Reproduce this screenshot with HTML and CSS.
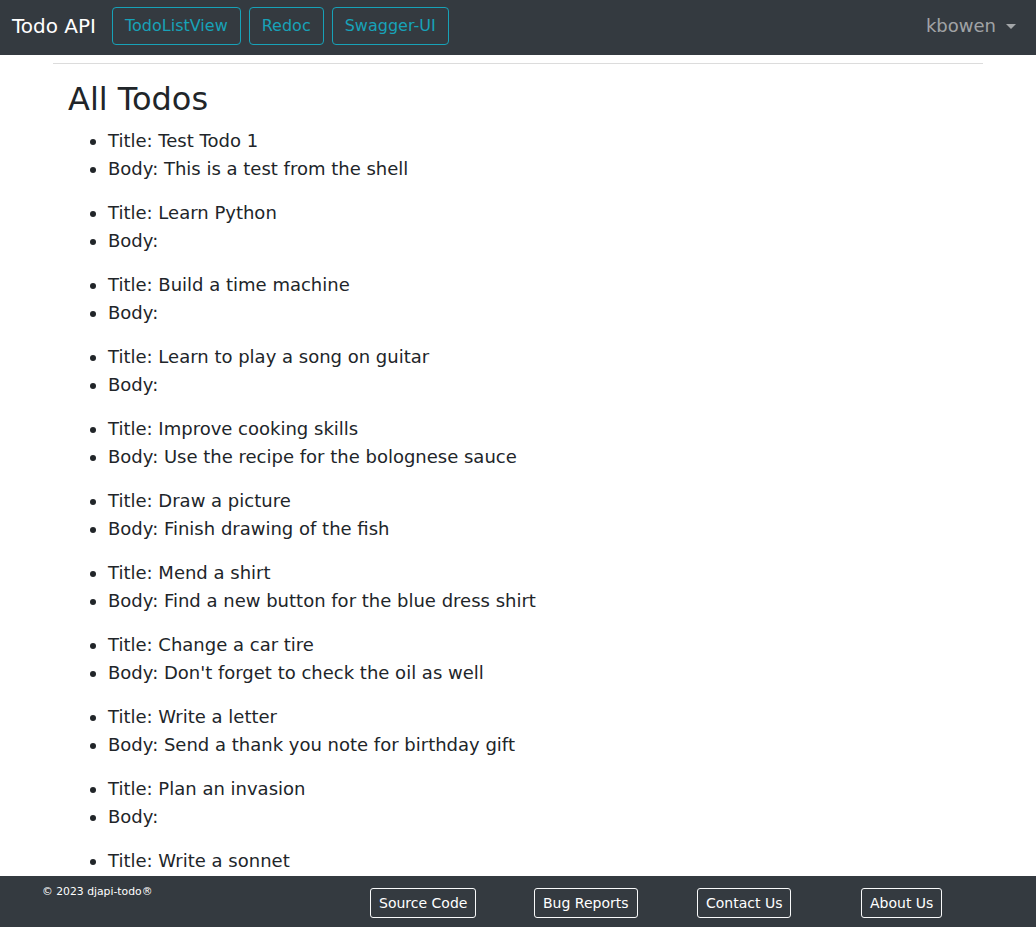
FILE: index.html
```html
<!DOCTYPE html>
<html lang="en">
<head>
<meta charset="utf-8">
<title>Todo API</title>
<link rel="stylesheet" href="styles.css">
</head>
<body>
<nav class="navbar">
  <a class="brand" href="#">Todo API</a>
  <div class="nav-links">
    <a class="btn-info" href="#">TodoListView</a>
    <a class="btn-info" href="#">Redoc</a>
    <a class="btn-info" href="#">Swagger-UI</a>
  </div>
  <a class="user" href="#">kbowen <span class="caret"></span></a>
</nav>
<main class="container">
  <hr class="rule">
  <section class="content">
    <h1 class="title">All Todos</h1>
    <ul class="todo"><li>Title: Test Todo 1</li><li>Body: This is a test from the shell</li></ul>
    <ul class="todo"><li>Title: Learn Python</li><li>Body: </li></ul>
    <ul class="todo"><li>Title: Build a time machine</li><li>Body: </li></ul>
    <ul class="todo"><li>Title: Learn to play a song on guitar</li><li>Body: </li></ul>
    <ul class="todo"><li>Title: Improve cooking skills</li><li>Body: Use the recipe for the bolognese sauce</li></ul>
    <ul class="todo"><li>Title: Draw a picture</li><li>Body: Finish drawing of the fish</li></ul>
    <ul class="todo"><li>Title: Mend a shirt</li><li>Body: Find a new button for the blue dress shirt</li></ul>
    <ul class="todo"><li>Title: Change a car tire</li><li>Body: Don't forget to check the oil as well</li></ul>
    <ul class="todo"><li>Title: Write a letter</li><li>Body: Send a thank you note for birthday gift</li></ul>
    <ul class="todo"><li>Title: Plan an invasion</li><li>Body: </li></ul>
    <ul class="todo"><li>Title: Write a sonnet</li></ul>
  </section>
</main>
<footer class="footer">
  <div class="copy">© 2023 djapi-todo®</div>
  <a class="btn-light" href="#">Source Code</a>
  <a class="btn-light" href="#">Bug Reports</a>
  <a class="btn-light" href="#">Contact Us</a>
  <a class="btn-light" href="#">About Us</a>
</footer>
</body>
</html>
```
FILE: styles.css
```css
* { box-sizing: border-box; }
html, body { margin: 0; padding: 0; }
body {
  font-family: "DejaVu Sans", sans-serif;
  font-size: 16px;
  line-height: 1.5;
  color: #212529;
  background: #fff;
  overflow: hidden;
  height: 927px;
}
a { text-decoration: none; }

.navbar {
  height: 55px;
  background: #343a40;
  display: flex;
  align-items: flex-start;
  padding: 7px 20px 0 12px;
}
.brand {
  color: #fff;
  font-size: 20px;
  line-height: 30px;
  margin: 4px 16px 0 0;
}
.nav-links { display: flex; gap: 8px; }
.btn-info {
  display: inline-block;
  color: #17a2b8;
  border: 1px solid #17a2b8;
  border-radius: 4px;
  padding: 6px 12px;
  font-size: 16px;
  line-height: 24px;
}
.user {
  margin: 5px 0 0 auto;
  color: rgba(255,255,255,.55);
  font-size: 18px;
  line-height: 28px;
  display: flex;
  align-items: center;
}
.caret {
  display: inline-block;
  margin-left: 10px;
  width: 0; height: 0;
  border-top: 5px solid rgba(255,255,255,.55);
  border-left: 5px solid transparent;
  border-right: 5px solid transparent;
}

.container {
  width: 960px;
  margin: 0 auto;
  padding: 0 15px;
}
.rule {
  margin: 8px 0 0;
  border: 0;
  border-top: 1px solid #dcdcdc;
}
.content { padding: 0 15px; }
.title {
  font-size: 32px;
  font-weight: 400;
  line-height: 38px;
  margin: 16px 0 9px;
}
.todo {
  margin: 0 0 16px;
  padding-left: 40px;
  font-size: 18px;
  line-height: 28px;
}

.footer {
  position: fixed;
  left: 0; right: 0; bottom: 0;
  height: 51px;
  background: #343a40;
  display: grid;
  grid-template-columns: 328px 164px 163px 164px auto;
  align-items: start;
  padding: 12px 0 0 42px;
}
.copy {
  color: #fff;
  font-size: 10.8px;
  line-height: 14px;
  margin-top: -3px;
}
.btn-light {
  justify-self: start;
  color: #fff;
  border: 1px solid #f8f9fa;
  border-radius: 3px;
  padding: 3px 8px;
  font-size: 14px;
  line-height: 22px;
}
```
